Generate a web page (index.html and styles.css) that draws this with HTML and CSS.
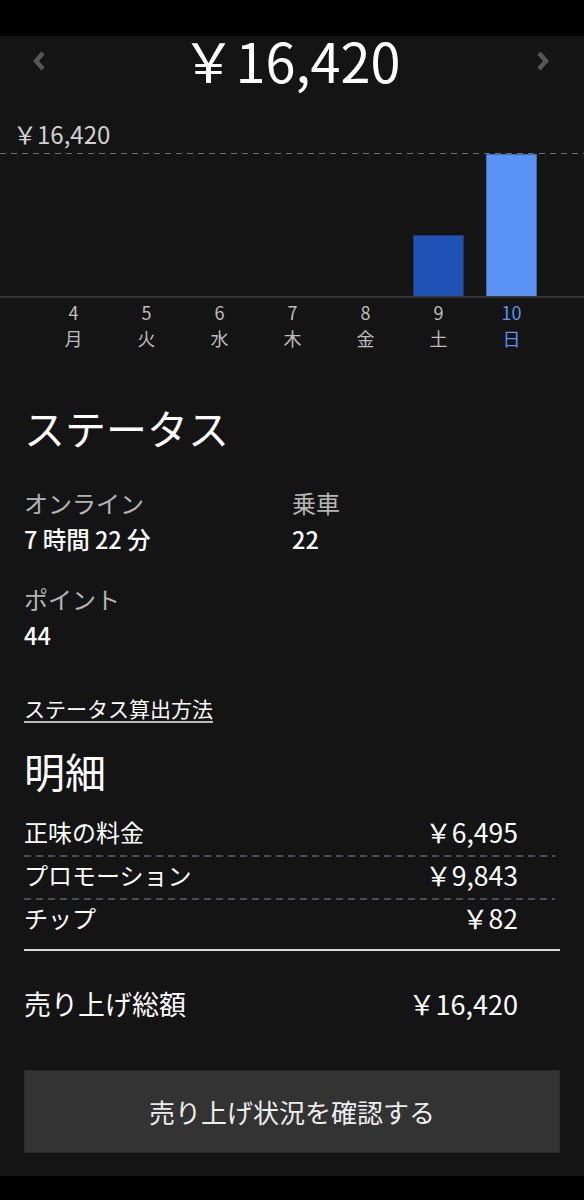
FILE: index.html
```html
<!DOCTYPE html>
<html lang="ja">
<head>
<meta charset="utf-8">
<link rel="stylesheet" href="styles.css">
</head>
<body>
<div class="topbar"></div>
<main class="screen">
  <header class="summary">
    <svg class="chev" width="16" height="24" viewBox="0 0 16 24"><polyline points="11,4 4,12 11,20" fill="none" stroke="#555" stroke-width="4.5"/></svg>
    <div class="total">￥16,420</div>
    <svg class="chev" width="16" height="24" viewBox="0 0 16 24"><polyline points="5,4 12,12 5,20" fill="none" stroke="#555" stroke-width="4.5"/></svg>
  </header>

  <section class="chart">
    <div class="max-label">￥16,420</div>
    <div class="plot">
      <div class="bars">
        <div class="col"></div>
        <div class="col"></div>
        <div class="col"></div>
        <div class="col"></div>
        <div class="col"></div>
        <div class="col"><div class="bar bar-dark" style="height:61px"></div></div>
        <div class="col"><div class="bar bar-light" style="height:142px"></div></div>
      </div>
    </div>
    <div class="days">
      <div class="day"><span>4</span><span>月</span></div>
      <div class="day"><span>5</span><span>火</span></div>
      <div class="day"><span>6</span><span>水</span></div>
      <div class="day"><span>7</span><span>木</span></div>
      <div class="day"><span>8</span><span>金</span></div>
      <div class="day"><span>9</span><span>土</span></div>
      <div class="day active"><span>10</span><span>日</span></div>
    </div>
  </section>

  <section class="status">
    <h2 class="heading">ステータス</h2>
    <div class="stats">
      <div class="stat"><div class="stat-label">オンライン</div><div class="stat-value">7 時間 22 分</div></div>
      <div class="stat"><div class="stat-label">乗車</div><div class="stat-value">22</div></div>
      <div class="stat"><div class="stat-label">ポイント</div><div class="stat-value">44</div></div>
    </div>
    <a class="link">ステータス算出方法</a>
  </section>

  <section class="detail">
    <h2 class="heading">明細</h2>
    <div class="rows">
      <div class="row dashed"><span>正味の料金</span><span class="amt">￥6,495</span></div>
      <div class="row dashed"><span>プロモーション</span><span class="amt">￥9,843</span></div>
      <div class="row last"><span>チップ</span><span class="amt">￥82</span></div>
    </div>
    <div class="row total-row"><span>売り上げ総額</span><span class="amt">￥16,420</span></div>
    <button class="btn">売り上げ状況を確認する</button>
  </section>
</main>
</body>
</html>
```
FILE: styles.css
```css
* { box-sizing: border-box; }
html, body { margin: 0; padding: 0; background: #000; }
body {
  width: 584px;
  height: 1200px;
  overflow: hidden;
  font-family: "Noto Sans CJK JP", "Noto Sans", sans-serif;
  color: #fff;
}
.topbar { height: 36px; background: #000; }
.screen {
  height: 1140px;
  background: #141414;
  display: flex;
  flex-direction: column;
}
.summary {
  height: 80px;
  display: flex;
  align-items: flex-start;
  justify-content: space-between;
  padding: 0 84px 0 32px;
}
.chev { margin-top: 13px; flex: none; }
.summary .chev:last-child { margin-right: -50px; }
.total {
  font-size: 54px;
  line-height: 54px;
  margin-top: -3px;
  color: #fff;
}
.chart { display: flex; flex-direction: column; }
.max-label {
  font-size: 24px;
  line-height: 28px;
  color: #d0d0d0;
  padding-left: 13px;
  margin-top: 4px;
  height: 33px;
}
.plot {
  height: 145px;
  padding: 1px 36px 0 37px;
  border-bottom: 2px solid #333;
  background-image: linear-gradient(to right, #6e6e6e 6px, transparent 6px);
  background-size: 11px 1px;
  background-repeat: repeat-x;
  background-position: 0 0;
}
.bars {
  height: 100%;
  display: grid;
  grid-template-columns: repeat(7, 73px);
  align-items: end;
}
.col { display: flex; justify-content: center; align-items: flex-end; height: 100%; }
.bar { width: 51px; border: 1px solid #22386a; border-bottom: none; }
.bar-dark { background: #1e52b5; }
.bar-light { background: #5b93f5; border-color: #3d6ab8; }
.days {
  display: grid;
  grid-template-columns: repeat(7, 73px);
  padding: 1px 36px 0 37px;
}
.day {
  display: flex;
  flex-direction: column;
  align-items: center;
  color: #bdbdbd;
  font-size: 18px;
  line-height: 26px;
}
.day.active { color: #5b93f5; }

.status { padding: 48px 24px 0; }
.heading {
  margin: 0;
  font-weight: 400;
  font-size: 41px;
  line-height: 56px;
}
.stats {
  display: grid;
  grid-template-columns: 268px 1fr;
  row-gap: 24px;
  margin-top: 30px;
}
.stat-label { font-size: 24px; line-height: 36px; color: #b5b5b5; }
.stat-value { font-size: 23.5px; line-height: 36px; color: #fff; font-weight: 500; }
.link {
  display: inline-block;
  margin-top: 40px;
  font-size: 21px;
  line-height: 30px;
  color: #fff;
  text-decoration: underline;
  text-underline-offset: 4px;
  text-decoration-color: #bbb;
}
.detail { padding: 19px 24px 0; }
.rows {
  margin-top: 16px;
  border-bottom: 2px solid #d8d8d8;
}
.row {
  display: flex;
  justify-content: space-between;
  font-size: 24px;
  line-height: 36px;
  padding-right: 42px;
}
.row.dashed {
  margin-right: 5px;
  padding-right: 37px;
  padding-bottom: 7px;
  background-image: linear-gradient(to right, #4b4e53 7px, transparent 7px);
  background-size: 12px 2px;
  background-repeat: repeat-x;
  background-position: 0 100%;
}
.row.last { padding-bottom: 13px; }
.amt { font-size: 26.5px; }
.total-row { margin-top: 33px; font-size: 27px; line-height: 40px; }
.total-row .amt { font-size: 27px; }
.btn {
  display: block;
  width: 536px;
  height: 83px;
  margin-top: 46px;
  background: #333;
  border: 1px solid #2a2a2a;
  color: #eee;
  font-family: inherit;
  font-size: 26px;
  padding: 0;
}
```
